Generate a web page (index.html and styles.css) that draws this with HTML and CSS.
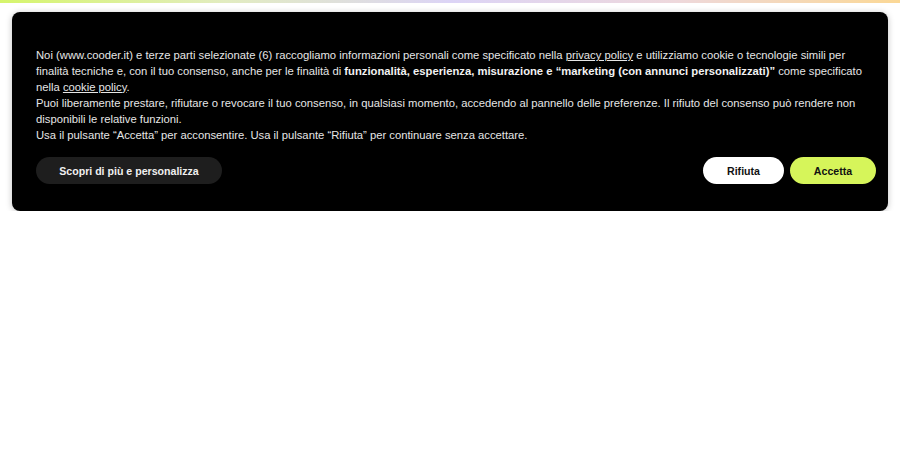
FILE: index.html
```html
<!DOCTYPE html>
<html lang="it">
<head>
<meta charset="utf-8">
<link rel="stylesheet" href="styles.css">
</head>
<body>
<div class="topbar"></div>
<div class="banner">
  <div class="text">
    <p>Noi (www.cooder.it) e terze parti selezionate (6) raccogliamo informazioni personali come specificato nella <a href="#">privacy policy</a> e utilizziamo cookie o tecnologie simili per finalità tecniche e, con il tuo consenso, anche per le finalità di <b>funzionalità, esperienza, misurazione e “marketing (con annunci personalizzati)”</b> come specificato nella <a href="#">cookie policy</a>.</p>
    <p>Puoi liberamente prestare, rifiutare o revocare il tuo consenso, in qualsiasi momento, accedendo al pannello delle preferenze. Il rifiuto del consenso può rendere non disponibili le relative funzioni.</p>
    <p>Usa il pulsante “Accetta” per acconsentire. Usa il pulsante “Rifiuta” per continuare senza accettare.</p>
  </div>
  <div class="actions">
    <button class="btn btn-more">Scopri di più e personalizza</button>
    <div class="right">
      <button class="btn btn-reject">Rifiuta</button>
      <button class="btn btn-accept">Accetta</button>
    </div>
  </div>
</div>
</body>
</html>
```
FILE: styles.css
```css
html, body {
  margin: 0;
  padding: 0;
  background: #fff;
}
.topbar {
  height: 3px;
  background: linear-gradient(90deg, #d6f56c 0%, #e2ecc0 25%, #dcd4f6 50%, #eed8dc 75%, #fbd896 100%);
}
.banner {
  margin: 9px 12px 0;
  background: #000;
  border-radius: 8px;
  padding: 36px 24px 27px;
  box-shadow: 0 1px 6px rgba(0,0,0,0.25);
  font-family: "Liberation Sans", Arial, sans-serif;
  color: #e6e6e6;
  font-size: 11.25px;
  line-height: 15.9px;
}
.text p {
  margin: 0;
}
.text a {
  color: #e6e6e6;
  text-decoration: underline;
}
.text b {
  font-weight: bold;
  color: #f2f2f2;
}
.actions {
  margin-top: 14px;
  margin-right: -12px;
  display: flex;
  justify-content: space-between;
  align-items: center;
}
.right {
  display: flex;
  gap: 6px;
}
.btn {
  height: 27px;
  border: none;
  border-radius: 14px;
  font-family: "Liberation Sans", Arial, sans-serif;
  font-weight: 700;
  font-size: 10.6px;
  padding: 0;
  cursor: pointer;
}
.btn-more {
  width: 186px;
  background: #1e1e1e;
  color: #f0f0f0;
}
.btn-reject {
  width: 81px;
  background: #fff;
  color: #111;
}
.btn-accept {
  width: 86px;
  background: #d6f55a;
  color: #111;
}
```
